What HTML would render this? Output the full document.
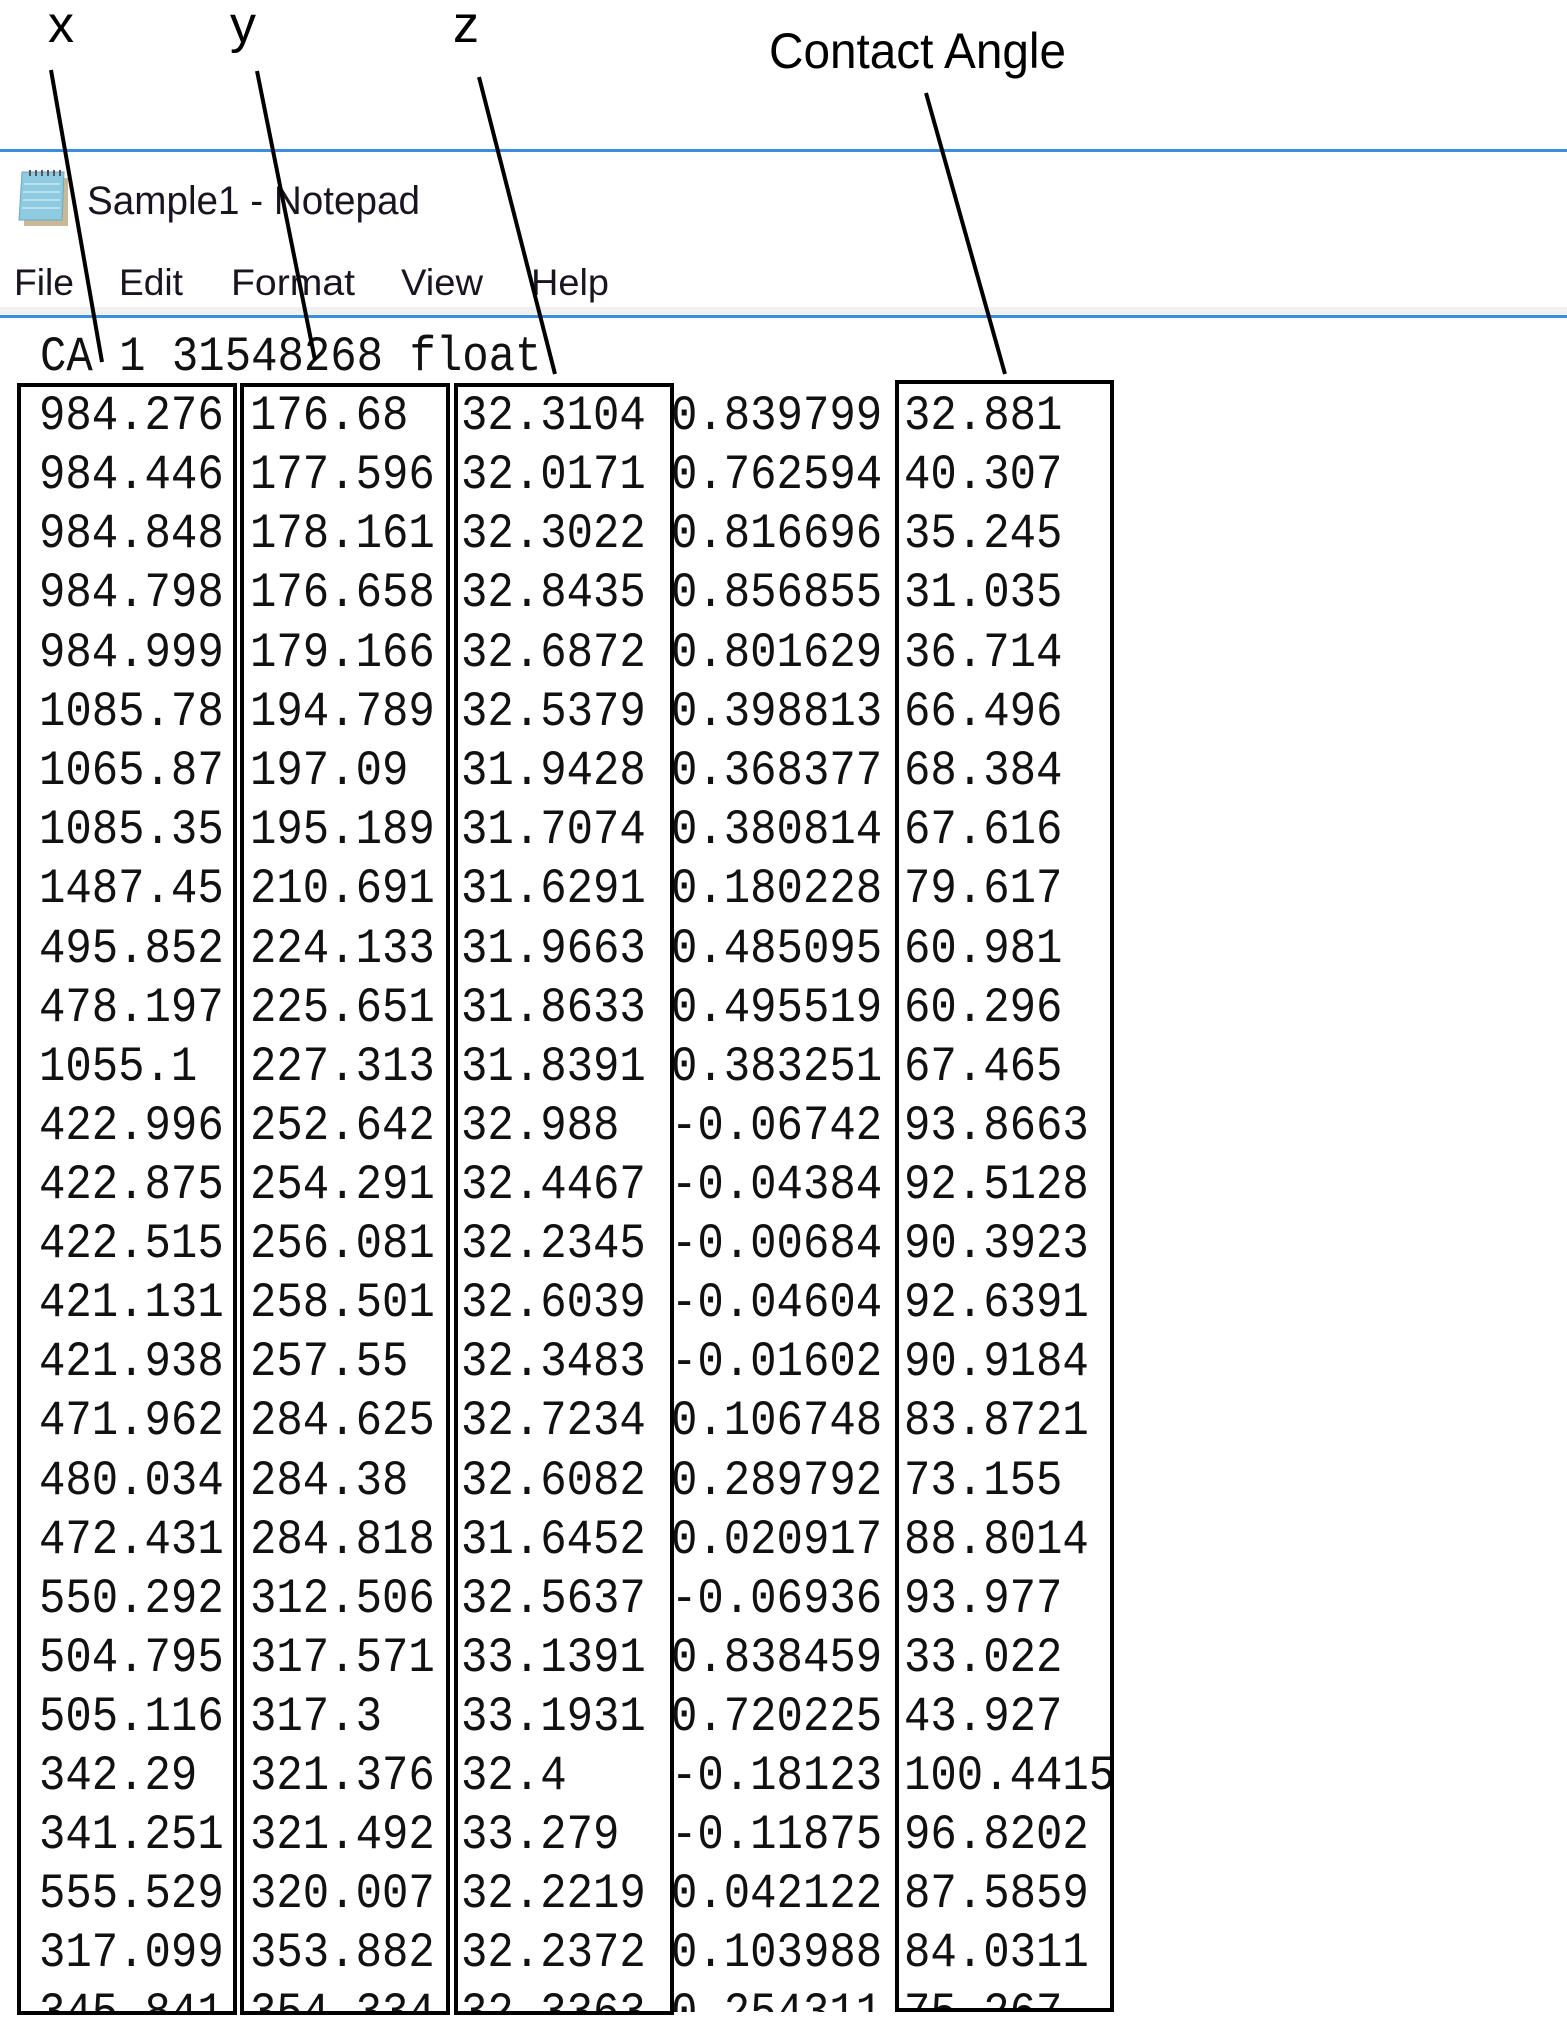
<!DOCTYPE html>
<html><head><meta charset="utf-8"><style>
html,body{margin:0;padding:0;background:#fff;}
svg{display:block;}
.lab{font-family:"Liberation Sans",sans-serif;fill:#000;}
.ui{font-family:"Liberation Sans",sans-serif;fill:#1a1420;}
.m{font-family:"Liberation Mono",monospace;font-size:49px;fill:#111;}
</style></head><body>
<svg width="1567" height="2018" viewBox="0 0 1567 2018" xmlns="http://www.w3.org/2000/svg">
<rect width="1567" height="2018" fill="#fff"/>
<text class="lab" x="48" y="42" font-size="52">x</text>
<text class="lab" x="230" y="42" font-size="52">y</text>
<text class="lab" x="453" y="42" font-size="52">z</text>
<text class="lab" x="769" y="68" font-size="50" textLength="297" lengthAdjust="spacingAndGlyphs">Contact Angle</text>
<rect x="0" y="149" width="1567" height="3" fill="#3a8fdc"/>
<rect x="0" y="307" width="1567" height="8" fill="#f0f0f0"/>
<rect x="0" y="315" width="1567" height="3" fill="#3a8fdc"/>
<g>
<rect x="24" y="178" width="44" height="48" fill="#c9b896"/>
<path d="M22 172 L64 172 L62 220 L19 220 Z" fill="#8fcbe0" stroke="#6aaac4" stroke-width="1"/>
<g stroke="#b8e2ee" stroke-width="2"><line x1="24" y1="184" x2="60" y2="184"/><line x1="23" y1="192" x2="60" y2="192"/><line x1="23" y1="200" x2="60" y2="200"/><line x1="22" y1="208" x2="60" y2="208"/></g>
<path d="M30 170 v6 M36 170 v6 M42 170 v6 M48 170 v6 M54 170 v6 M60 170 v6" stroke="#555" stroke-width="2"/>
</g>
<text class="ui" x="87" y="214" font-size="40" textLength="333" lengthAdjust="spacingAndGlyphs">Sample1 - Notepad</text>
<g class="ui" font-size="37">
<text x="14" y="295" textLength="60" lengthAdjust="spacingAndGlyphs">File</text>
<text x="119" y="295" textLength="64" lengthAdjust="spacingAndGlyphs">Edit</text>
<text x="231" y="295" textLength="124" lengthAdjust="spacingAndGlyphs">Format</text>
<text x="401" y="295" textLength="82" lengthAdjust="spacingAndGlyphs">View</text>
<text x="531" y="295" textLength="78" lengthAdjust="spacingAndGlyphs">Help</text>
</g>
<defs><clipPath id="c"><rect x="0" y="320" width="1567" height="1692"/></clipPath></defs>
<g clip-path="url(#c)">
<g class="m" transform="scale(0.898,1)">
<text x="44.5" y="370">CA 1 31548268 float</text>
<text y="429"><tspan x="43.4">984.276</tspan><tspan x="278.4">176.68</tspan><tspan x="513.4">32.3104</tspan><tspan x="747.2">0.839799</tspan><tspan x="1006.7">32.881</tspan></text>
<text y="488"><tspan x="43.4">984.446</tspan><tspan x="278.4">177.596</tspan><tspan x="513.4">32.0171</tspan><tspan x="747.2">0.762594</tspan><tspan x="1006.7">40.307</tspan></text>
<text y="547"><tspan x="43.4">984.848</tspan><tspan x="278.4">178.161</tspan><tspan x="513.4">32.3022</tspan><tspan x="747.2">0.816696</tspan><tspan x="1006.7">35.245</tspan></text>
<text y="606"><tspan x="43.4">984.798</tspan><tspan x="278.4">176.658</tspan><tspan x="513.4">32.8435</tspan><tspan x="747.2">0.856855</tspan><tspan x="1006.7">31.035</tspan></text>
<text y="666"><tspan x="43.4">984.999</tspan><tspan x="278.4">179.166</tspan><tspan x="513.4">32.6872</tspan><tspan x="747.2">0.801629</tspan><tspan x="1006.7">36.714</tspan></text>
<text y="725"><tspan x="43.4">1085.78</tspan><tspan x="278.4">194.789</tspan><tspan x="513.4">32.5379</tspan><tspan x="747.2">0.398813</tspan><tspan x="1006.7">66.496</tspan></text>
<text y="784"><tspan x="43.4">1065.87</tspan><tspan x="278.4">197.09</tspan><tspan x="513.4">31.9428</tspan><tspan x="747.2">0.368377</tspan><tspan x="1006.7">68.384</tspan></text>
<text y="843"><tspan x="43.4">1085.35</tspan><tspan x="278.4">195.189</tspan><tspan x="513.4">31.7074</tspan><tspan x="747.2">0.380814</tspan><tspan x="1006.7">67.616</tspan></text>
<text y="902"><tspan x="43.4">1487.45</tspan><tspan x="278.4">210.691</tspan><tspan x="513.4">31.6291</tspan><tspan x="747.2">0.180228</tspan><tspan x="1006.7">79.617</tspan></text>
<text y="962"><tspan x="43.4">495.852</tspan><tspan x="278.4">224.133</tspan><tspan x="513.4">31.9663</tspan><tspan x="747.2">0.485095</tspan><tspan x="1006.7">60.981</tspan></text>
<text y="1021"><tspan x="43.4">478.197</tspan><tspan x="278.4">225.651</tspan><tspan x="513.4">31.8633</tspan><tspan x="747.2">0.495519</tspan><tspan x="1006.7">60.296</tspan></text>
<text y="1080"><tspan x="43.4">1055.1</tspan><tspan x="278.4">227.313</tspan><tspan x="513.4">31.8391</tspan><tspan x="747.2">0.383251</tspan><tspan x="1006.7">67.465</tspan></text>
<text y="1139"><tspan x="43.4">422.996</tspan><tspan x="278.4">252.642</tspan><tspan x="513.4">32.988</tspan><tspan x="747.2">-0.06742</tspan><tspan x="1006.7">93.8663</tspan></text>
<text y="1198"><tspan x="43.4">422.875</tspan><tspan x="278.4">254.291</tspan><tspan x="513.4">32.4467</tspan><tspan x="747.2">-0.04384</tspan><tspan x="1006.7">92.5128</tspan></text>
<text y="1257"><tspan x="43.4">422.515</tspan><tspan x="278.4">256.081</tspan><tspan x="513.4">32.2345</tspan><tspan x="747.2">-0.00684</tspan><tspan x="1006.7">90.3923</tspan></text>
<text y="1316"><tspan x="43.4">421.131</tspan><tspan x="278.4">258.501</tspan><tspan x="513.4">32.6039</tspan><tspan x="747.2">-0.04604</tspan><tspan x="1006.7">92.6391</tspan></text>
<text y="1375"><tspan x="43.4">421.938</tspan><tspan x="278.4">257.55</tspan><tspan x="513.4">32.3483</tspan><tspan x="747.2">-0.01602</tspan><tspan x="1006.7">90.9184</tspan></text>
<text y="1434"><tspan x="43.4">471.962</tspan><tspan x="278.4">284.625</tspan><tspan x="513.4">32.7234</tspan><tspan x="747.2">0.106748</tspan><tspan x="1006.7">83.8721</tspan></text>
<text y="1494"><tspan x="43.4">480.034</tspan><tspan x="278.4">284.38</tspan><tspan x="513.4">32.6082</tspan><tspan x="747.2">0.289792</tspan><tspan x="1006.7">73.155</tspan></text>
<text y="1553"><tspan x="43.4">472.431</tspan><tspan x="278.4">284.818</tspan><tspan x="513.4">31.6452</tspan><tspan x="747.2">0.020917</tspan><tspan x="1006.7">88.8014</tspan></text>
<text y="1612"><tspan x="43.4">550.292</tspan><tspan x="278.4">312.506</tspan><tspan x="513.4">32.5637</tspan><tspan x="747.2">-0.06936</tspan><tspan x="1006.7">93.977</tspan></text>
<text y="1671"><tspan x="43.4">504.795</tspan><tspan x="278.4">317.571</tspan><tspan x="513.4">33.1391</tspan><tspan x="747.2">0.838459</tspan><tspan x="1006.7">33.022</tspan></text>
<text y="1730"><tspan x="43.4">505.116</tspan><tspan x="278.4">317.3</tspan><tspan x="513.4">33.1931</tspan><tspan x="747.2">0.720225</tspan><tspan x="1006.7">43.927</tspan></text>
<text y="1789"><tspan x="43.4">342.29</tspan><tspan x="278.4">321.376</tspan><tspan x="513.4">32.4</tspan><tspan x="747.2">-0.18123</tspan><tspan x="1006.7">100.4415</tspan></text>
<text y="1848"><tspan x="43.4">341.251</tspan><tspan x="278.4">321.492</tspan><tspan x="513.4">33.279</tspan><tspan x="747.2">-0.11875</tspan><tspan x="1006.7">96.8202</tspan></text>
<text y="1907"><tspan x="43.4">555.529</tspan><tspan x="278.4">320.007</tspan><tspan x="513.4">32.2219</tspan><tspan x="747.2">0.042122</tspan><tspan x="1006.7">87.5859</tspan></text>
<text y="1966"><tspan x="43.4">317.099</tspan><tspan x="278.4">353.882</tspan><tspan x="513.4">32.2372</tspan><tspan x="747.2">0.103988</tspan><tspan x="1006.7">84.0311</tspan></text>
<text y="2026"><tspan x="43.4">345.841</tspan><tspan x="278.4">354.334</tspan><tspan x="513.4">32.3363</tspan><tspan x="747.2">0.254311</tspan><tspan x="1006.7">75.267</tspan></text>
</g>
</g>
<g fill="none" stroke="#000" stroke-width="4">
<rect x="19" y="385" width="216" height="1628"/>
<rect x="242" y="385" width="206" height="1628"/>
<rect x="456" y="385" width="216" height="1628"/>
<rect x="897" y="382" width="215" height="1628"/>
</g>
<g stroke="#000" stroke-width="4" fill="none">
<line x1="51" y1="70" x2="102" y2="362"/>
<line x1="257" y1="71" x2="315" y2="360"/>
<line x1="479" y1="77" x2="555" y2="374"/>
<line x1="926" y1="93" x2="1005" y2="374"/>
</g>
</svg>
</body></html>
